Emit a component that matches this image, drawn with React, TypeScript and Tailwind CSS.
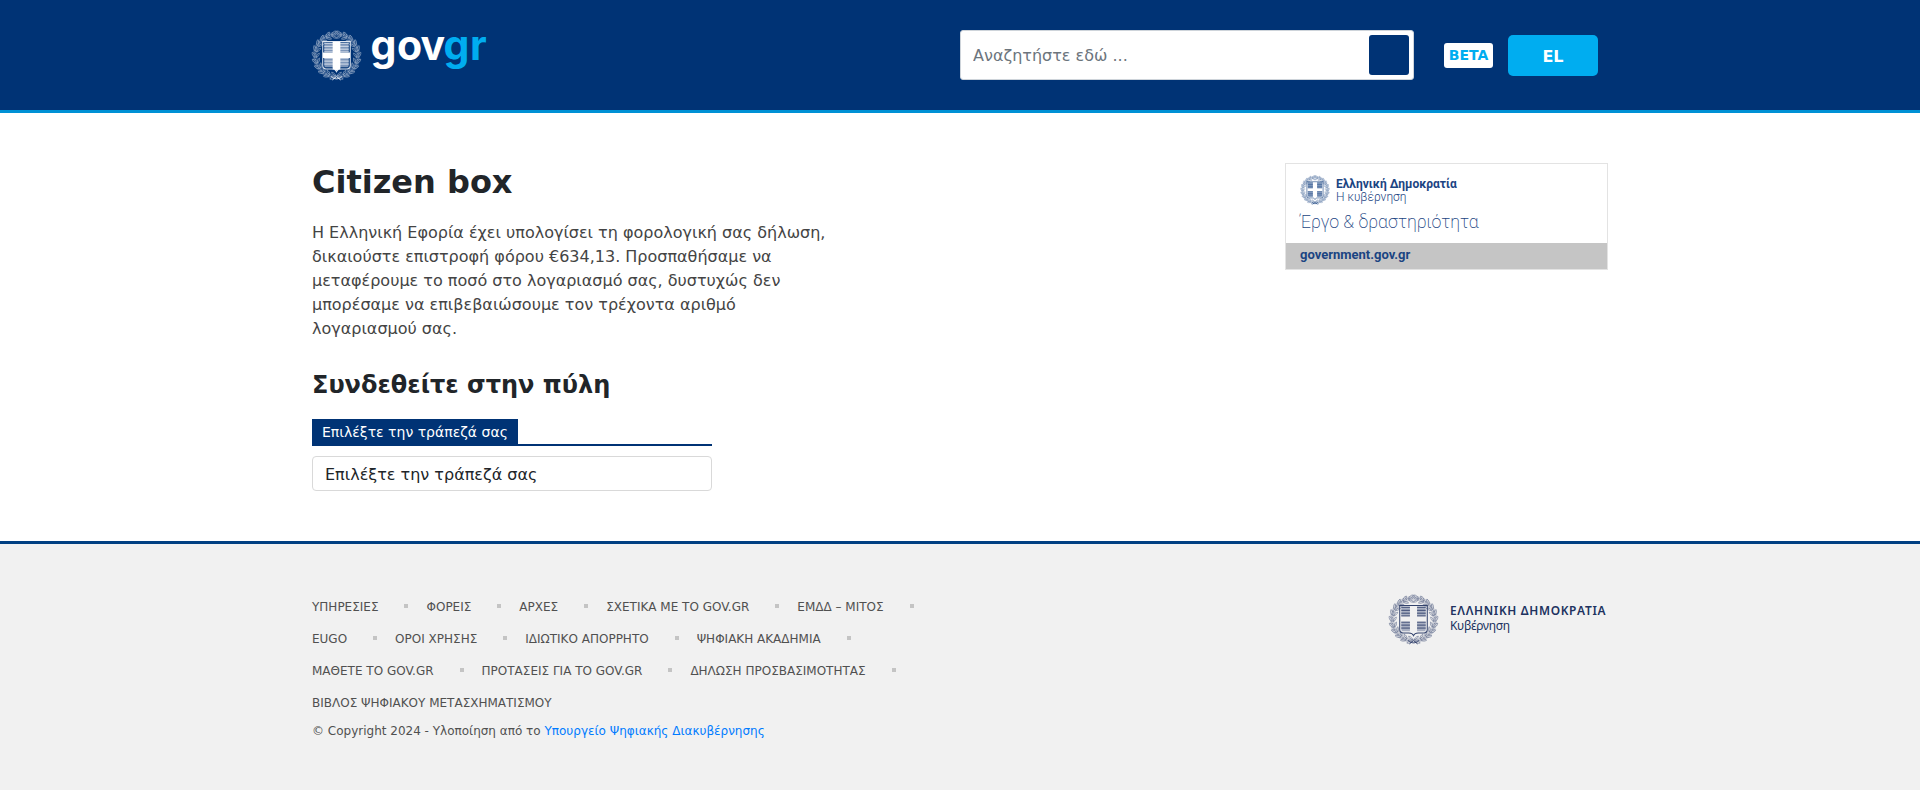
import React from "react";

const LEAVES = Array.from({ length: 22 }, (_, i) => i);

type EmblemProps = { className: string; ink: string; stripe: string; solid?: boolean };

function Emblem({ className, ink, stripe, solid }: EmblemProps) {
  return (
    <svg viewBox="0 0 50 50" className={className} fill="none" stroke={ink}>
      <circle cx="25" cy="25" r="21" strokeWidth="4.500" opacity="0.2" />
      {LEAVES.map((i) => {
        const turn = ((i + 0.5) * 360) / LEAVES.length;
        const flip = turn > 180 ? -1 : 1;
        return (
          <g key={i} transform={`rotate(${turn} 25 25) scale(${flip} 1) translate(${flip < 0 ? -50 : 0} 0)`} strokeWidth="0.65" opacity="0.65">
            <path d="M27 4c-1.200-2.200-3-3.200-5.200-2.800 .8 2 2.800 3.200 5.200 2.800z" />
            <path d="M27 5c-2 .4-4.200 1.800-4.400 3.200 2.200-.2 3.800-1.200 4.400-3.200z" />
            <path d="M22 3.600l2 1.200" />
          </g>
        );
      })}
      <path d="M20 45.500c3 3.200 7 3.200 10 0M21 49l4-3.500 4 3.500" strokeWidth="0.9" />
      <path
        d="M11.500 11.200h27v23.800c0 2-1.200 3.200-3.500 3.200h-5.500c-2.300 0-3.800 1-4.500 2.600-.7-1.600-2.200-2.600-4.500-2.600h-5.500c-2.300 0-3.500-1.200-3.500-3.200z"
        strokeWidth="1"
      />
      <path d="M13 12.500h8.500v9h-8.500zM28.500 12.500h8.500v9h-8.500zM13 27.500h8.500v9h-6.500c-1.500 0-2-.8-2-2zM28.500 27.500h8.500v7c0 1.200-.5 2-2 2h-6.500z" fill={stripe} stroke="none" />
      <path d="M13 13h8.500M13 16h8.500M13 18.800h8.500M13 21.500h8.500M28.500 13h8.500M28.500 16h8.500M28.500 18.800h8.500M28.500 21.500h8.500" strokeWidth="0.9" />
      <path d="M13 27.600h8.500M13 30.500h8.500M13 33.400h8.500M28.500 27.600h8.500M28.500 30.500h8.500M28.500 33.400h8.500" strokeWidth="0.9" />
      {solid ? (
        <path d="M21.200 11.500h7.600v10.500h9.400v5.500h-9.400v10.500l-3.800 1.800-3.800-1.800v-10.500h-9.400v-5.500h9.400z" fill="#fff" stroke="none" />
      ) : null}
    </svg>
  );
}

const FOOTER_ROWS: string[][] = [
  ["ΥΠΗΡΕΣΙΕΣ", "ΦΟΡΕΙΣ", "ΑΡΧΕΣ", "ΣΧΕΤΙΚΑ ΜΕ ΤΟ GOV.GR", "ΕΜΔΔ – ΜΙΤΟΣ"],
  ["EUGO", "ΟΡΟΙ ΧΡΗΣΗΣ", "ΙΔΙΩΤΙΚΟ ΑΠΟΡΡΗΤΟ", "ΨΗΦΙΑΚΗ ΑΚΑΔΗΜΙΑ"],
  ["ΜΑΘΕΤΕ ΤΟ GOV.GR", "ΠΡΟΤΑΣΕΙΣ ΓΙΑ ΤΟ GOV.GR", "ΔΗΛΩΣΗ ΠΡΟΣΒΑΣΙΜΟΤΗΤΑΣ"],
  ["ΒΙΒΛΟΣ ΨΗΦΙΑΚΟΥ ΜΕΤΑΣΧΗΜΑΤΙΣΜΟΥ"],
];

function Header() {
  return (
    <header className="h-[113px] border-b-[3px] border-[#0091d5] bg-[#003375]">
      <div className="mx-auto flex h-full w-[1296px] items-center">
        <div className="flex items-center">
          <Emblem className="-ml-px h-[51px] w-[51px]" ink="#dfe6f0" stripe="#7d96ba" solid />
          <svg viewBox="0 -15 132 80" className="h-[80px] w-[132px] overflow-visible" fontFamily="Inter, sans-serif" fontWeight="700" fontSize="41">
            <text y="30" fill="#fff" x="8.500 35 58.500">gov</text>
            <text y="30" fill="#00adf0" x="81.500 108">gr</text>
          </svg>
        </div>
        <div className="ml-auto flex h-[50px] w-[454px] items-center rounded-[3px] border border-[#ced4da] bg-white pr-1 pl-3">
          <input
            className="min-w-0 flex-1 pt-0.5 text-base outline-none placeholder:text-[#6c757d]"
            placeholder="Αναζητήστε εδώ ..."
          />
          <button className="size-10 rounded-[3px] bg-[#003375]" />
        </div>
        <span className="ml-[30px] flex h-[25px] w-[49px] items-center justify-center rounded-[3px] bg-white text-[14px] font-bold text-[#00adf0]">
          BETA
        </span>
        <button className="mt-px mr-[10px] ml-[15px] h-[41px] w-[90px] rounded-[5px] bg-[#00adf0] pt-[2px] text-base font-bold text-white">
          EL
        </button>
      </div>
    </header>
  );
}

function GovernmentCard() {
  return (
    <a className="flex h-[107px] w-[323px] flex-col border border-[#e3e3e3] bg-white font-[Roboto,sans-serif] text-[#1b4482]">
      <div className="flex h-[79px] flex-col pt-[10px] pl-[14px]">
        <div className="flex">
          <Emblem className="mt-px size-[30px]" ink="#1b4482" stripe="#8fa5c4" />
          <div className="ml-[6px] pt-[4px]">
            <div className="text-[12px] leading-[13px] font-bold">Ελληνική Δημοκρατία</div>
            <div className="text-[12px] leading-[12px] font-light">Η κυβέρνηση</div>
          </div>
        </div>
        <div className="mt-[6px] text-[17.800px] leading-[22px] font-extralight">Έργο &amp; δραστηριότητα</div>
      </div>
      <div className="flex flex-1 items-center bg-[#c5c5c5] pb-[2px] pl-[14px] text-[13px] font-bold">government.gov.gr</div>
    </a>
  );
}

function Footer() {
  return (
    <footer className="flex-1 border-t-[3px] border-[#003f82] bg-[#f1f1f1]">
      <div className="mx-auto flex w-[1296px] justify-between pt-[50px] text-[12px] text-[#505050]">
        <div>
          {FOOTER_ROWS.map((row, r) => (
            <ul key={r} className="flex h-8">
              {row.map((label) => (
                <li key={label} className="flex h-[25px] items-center">
                  <a>{label}</a>
                  {r < 3 ? <span className="mr-[18px] mb-[1px] ml-[26px] size-1 bg-[#c4c4c4]" /> : null}
                </li>
              ))}
            </ul>
          ))}
          <p className="leading-[18px]">
            © Copyright 2024 - Υλοποίηση από το <a className="text-[#007bff]">Υπουργείο Ψηφιακής Διακυβέρνησης</a>
          </p>
        </div>
        <div className="flex text-[#20325f]">
          <Emblem className="size-[51px]" ink="#33436d" stripe="#a9b0c2" />
          <svg viewBox="0 0 169 50" className="h-[50px] w-[169px]" fontFamily="Noto Sans, sans-serif" fill="#20325f">
            <text x="11" y="21" fontSize="11.900" fontWeight="600" textLength="155.500">ΕΛΛΗΝΙΚΗ ΔΗΜΟΚΡΑΤΙΑ</text>
            <text x="11" y="35.500" fontSize="12" textLength="60">Κυβέρνηση</text>
          </svg>
        </div>
      </div>
    </footer>
  );
}

export default function App() {
  return (
    <div className="flex min-h-screen flex-col bg-white font-['DejaVu_Sans',sans-serif]">
      <Header />
      <main className="mx-auto flex h-[428px] w-[1296px] justify-between pt-[50px]">
        <div className="w-[530px]">
          <h1 className="text-[32px] leading-[38px] font-bold text-[#212529]">Citizen box</h1>
          <p className="mt-[20px] text-base leading-6 text-[#444]">
            Η Ελληνική Εφορία έχει υπολογίσει τη φορολογική σας δήλωση, δικαιούστε επιστροφή φόρου €634,13. Προσπαθήσαμε να
            μεταφέρουμε το ποσό στο λογαριασμό σας, δυστυχώς δεν μπορέσαμε να επιβεβαιώσουμε τον τρέχοντα αριθμό
            λογαριασμού σας.
          </p>
          <h2 className="mt-[29px] text-[24px] leading-[30px] font-bold text-[#212529]">Συνδεθείτε στην πύλη</h2>
          <div className="mt-[19px] flex h-[27px] w-[400px] border-b-2 border-[#003375]">
            <span className="flex h-[27px] items-center bg-[#003375] px-[10px] text-[14px] text-white">
              Επιλέξτε την τράπεζά σας
            </span>
          </div>
          <div className="mt-[10px] flex h-[35px] w-[400px] items-center rounded-[4px] border border-[#d9d9d9] px-3 pt-0.5 text-base text-[#212529]">
            Επιλέξτε την τράπεζά σας
          </div>
        </div>
        <GovernmentCard />
      </main>
      <Footer />
    </div>
  );
}
